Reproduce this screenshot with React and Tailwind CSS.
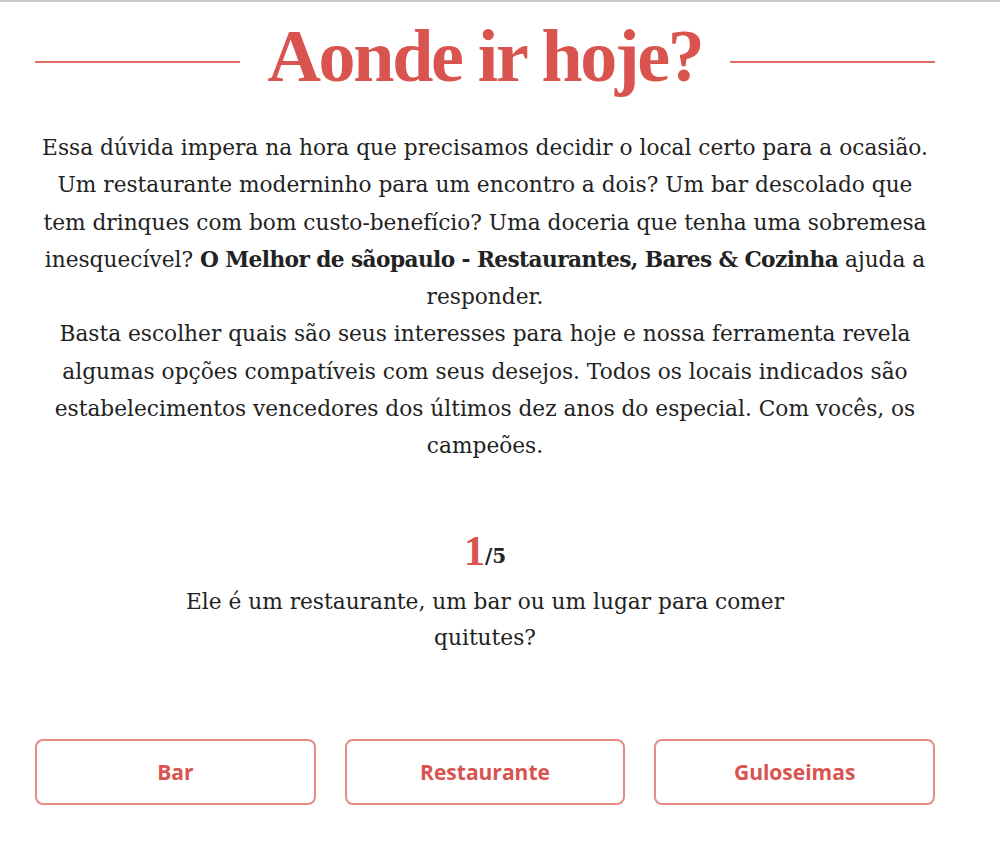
import React from 'react';

const serif = { fontFamily: '"DejaVu Serif", "Liberation Serif", serif' };

const opcoes = ['Bar', 'Restaurante', 'Guloseimas'];

const App = () => {
  return (
    <div className="min-h-[851px] bg-white border-t-2 border-[#c8c8c8]">
      <div className="w-[900px] ml-[35px] pt-[14px]">
        <div className="flex items-center gap-[27px]">
          <div className="flex-1 h-[2px] mt-[12px] bg-[#e06b65]" />
          <h1
            className="text-[#d9534f] text-[74px] leading-[80px] font-bold tracking-[-2.3px]"
            style={{ fontFamily: '"Liberation Serif", serif' }}
          >
            Aonde ir hoje?
          </h1>
          <div className="flex-1 h-[2px] mt-[12px] bg-[#e06b65]" />
        </div>

        <div className="mt-[33px] text-center text-[#222] text-[21.7px] leading-[37.25px]" style={serif}>
          <p>
            Essa dúvida impera na hora que precisamos decidir o local certo para a ocasião. Um restaurante
            moderninho para um encontro a dois? Um bar descolado que tem drinques com bom custo-benefício? Uma
            doceria que tenha uma sobremesa inesquecível?{' '}
            <b className="tracking-[-0.6px]">O Melhor de sãopaulo - Restaurantes, Bares &amp; Cozinha</b> ajuda a responder.
          </p>
          <p>
            Basta escolher quais são seus interesses para hoje e nossa ferramenta revela algumas opções compatíveis
            com seus desejos. Todos os locais indicados são estabelecimentos vencedores dos últimos dez anos do
            especial. Com vocês, os campeões.
          </p>
        </div>

        <div className="mt-[66px] flex flex-col items-center" style={serif}>
          <div className="flex items-end leading-none">
            <span
              className="text-[#d9534f] text-[42px] font-bold"
              style={{ fontFamily: '"Liberation Serif", serif' }}
            >
              1
            </span>
            <span className="text-[#222] text-[20px] font-bold mb-[6px]">/5</span>
          </div>
          <p className="mt-[12px] w-[614px] text-center text-[#222] text-[21.7px] leading-[36px]">
            Ele é um restaurante, um bar ou um lugar para comer quitutes?
          </p>
        </div>

        <div className="mt-[83px] grid grid-cols-3 gap-[29px]">
          {opcoes.map((o) => (
            <button
              key={o}
              type="button"
              className="h-[66px] rounded-[8px] border-2 border-[#ea8a85] bg-white text-[#d9534f] text-[21px] font-bold"
              style={{ fontFamily: '"Open Sans", sans-serif' }}
            >
              {o}
            </button>
          ))}
        </div>
      </div>
    </div>
  );
};

export default App;
